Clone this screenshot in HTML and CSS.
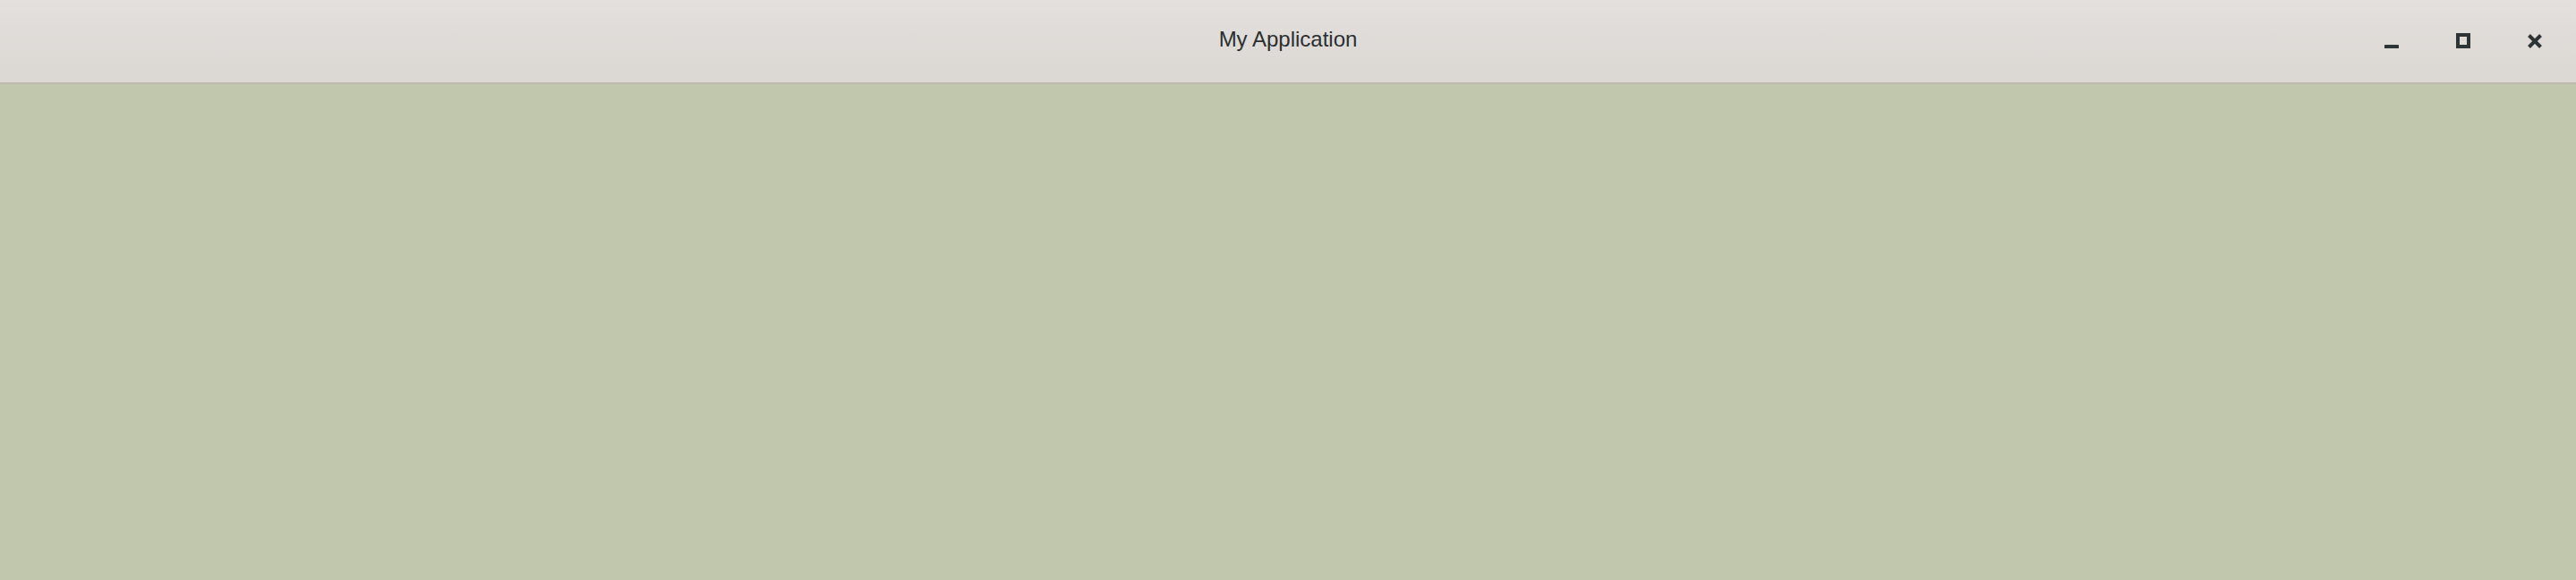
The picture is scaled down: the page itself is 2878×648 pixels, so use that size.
FILE: index.html
```html
<!DOCTYPE html>
<html>
<head>
<meta charset="utf-8">
<link rel="stylesheet" href="styles.css">
</head>
<body>
<div class="window">
  <header class="titlebar">
    <div class="spacer"></div>
    <div class="title">My Application</div>
    <div class="controls">
      <button class="ctl" aria-label="Minimize">
        <svg width="18" height="18" viewBox="0 0 18 18"><rect x="1" y="13" width="16" height="4" rx="0.5" fill="#2e3436"/></svg>
      </button>
      <button class="ctl" aria-label="Maximize">
        <svg width="18" height="18" viewBox="0 0 18 18"><rect x="3" y="2" width="12" height="13" fill="none" stroke="#2e3436" stroke-width="4"/></svg>
      </button>
      <button class="ctl" aria-label="Close">
        <svg width="18" height="18" viewBox="0 0 18 18"><path d="M2.5 2.5 L15.5 15.5 M15.5 2.5 L2.5 15.5" stroke="#2e3436" stroke-width="4" stroke-linecap="butt" fill="none"/></svg>
      </button>
    </div>
  </header>
  <main class="content"></main>
</div>
</body>
</html>
```
FILE: styles.css
```css
html, body {
  margin: 0;
  padding: 0;
  height: 100%;
}
body {
  font-family: "Liberation Sans", Arial, sans-serif;
  background: #c1c7ad;
}
.window {
  display: flex;
  flex-direction: column;
  height: 100%;
}
.titlebar {
  height: 92px;
  flex: none;
  display: grid;
  grid-template-columns: 1fr auto 1fr;
  background: linear-gradient(to bottom, #e3e0dd, #dbd7d3);
  border-bottom: 2px solid #bfb9b1;
}
.title {
  padding-top: 30px;
  font-size: 24px;
  line-height: 28px;
  color: #2b2f31;
}
.controls {
  justify-self: end;
  display: flex;
  padding-right: 6px;
}
.ctl {
  width: 80px;
  height: 92px;
  border: 0;
  padding: 0;
  margin: 0;
  background: transparent;
  display: flex;
  align-items: center;
  justify-content: center;
}
.ctl svg {
  display: block;
}
.content {
  flex: 1;
  background: #c1c7ad;
}
```
